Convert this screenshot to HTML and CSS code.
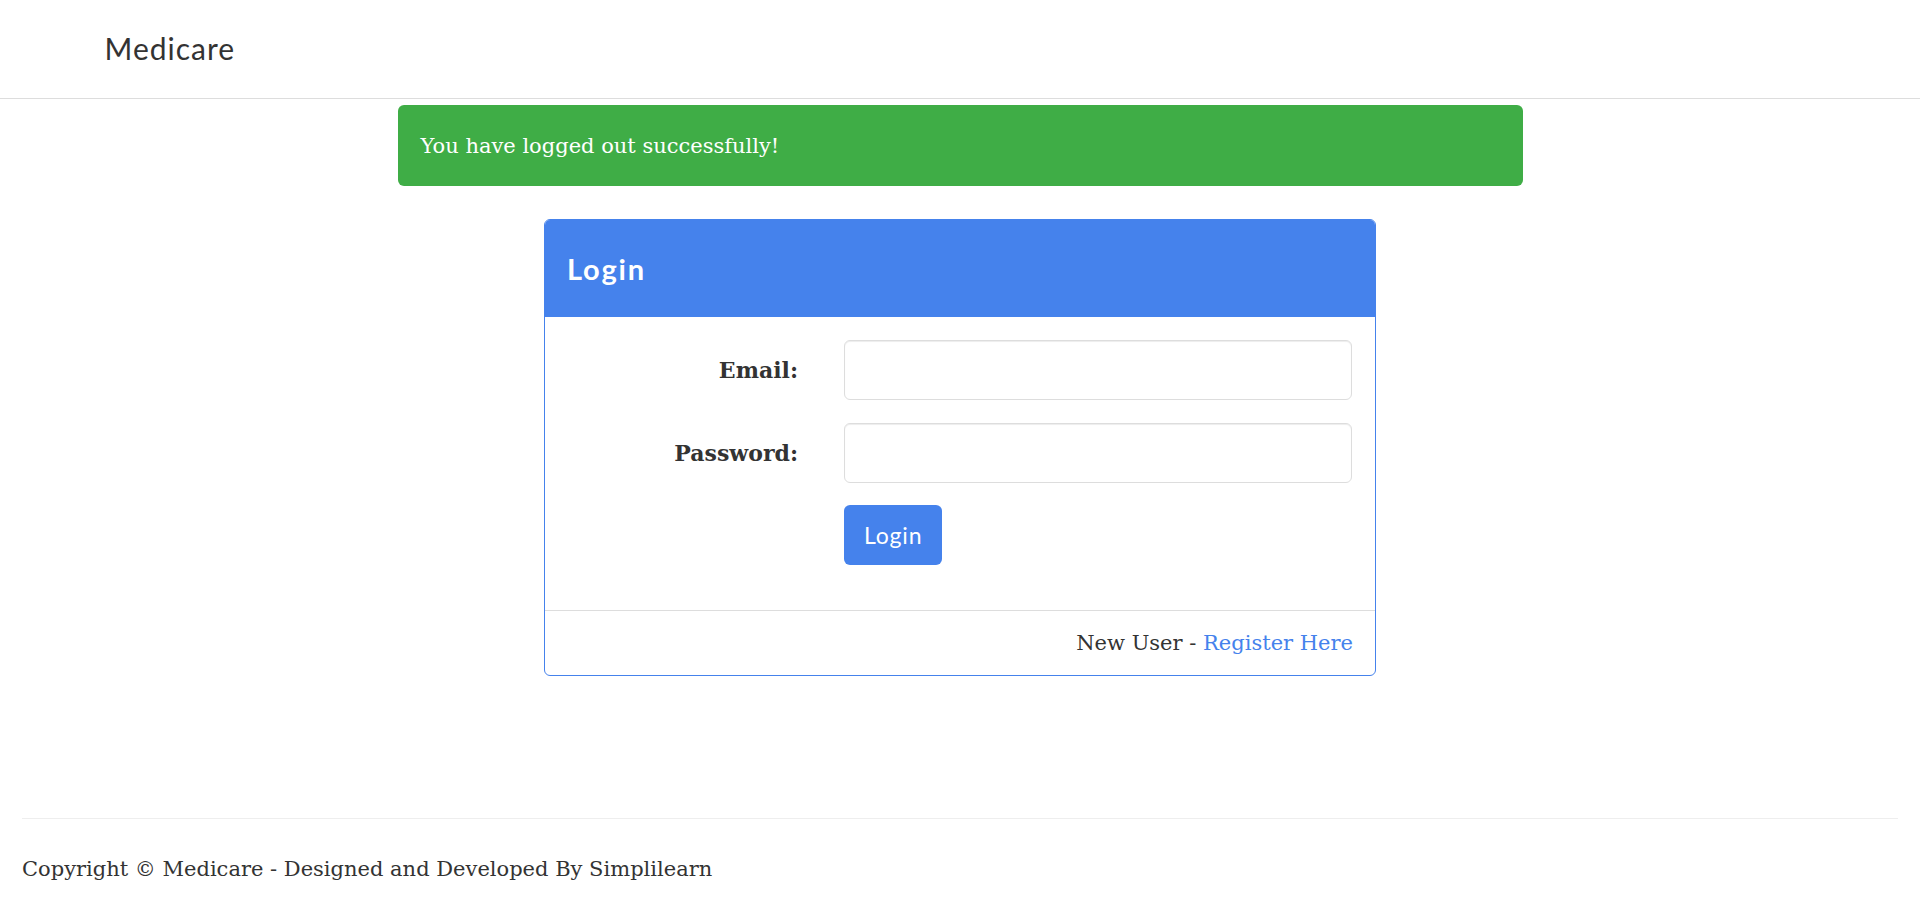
FILE: index.html
```html
<!DOCTYPE html>
<html lang="en">
<head>
<meta charset="utf-8">
<title>Medicare - Login</title>
<link rel="stylesheet" href="styles.css">
</head>
<body>
<nav class="navbar">
  <div class="container nav-inner">
    <a class="brand" href="#">Medicare</a>
  </div>
</nav>
<main class="main">
  <div class="alert">You have logged out successfully!</div>
  <div class="panel">
    <div class="panel-heading"><h3 class="panel-title">Login</h3></div>
    <div class="panel-body">
      <form class="login-form">
        <label class="form-label" for="email">Email:</label>
        <input class="form-input" id="email" type="email">
        <label class="form-label" for="password">Password:</label>
        <input class="form-input" id="password" type="password">
        <span></span>
        <div><button class="btn" type="button">Login</button></div>
      </form>
    </div>
    <div class="panel-footer">New User - <a class="link" href="#">Register Here</a></div>
  </div>
</main>
<footer class="site-footer">
  <hr class="footer-rule">
  <p class="copyright">Copyright © Medicare - Designed and Developed By Simplilearn</p>
</footer>
</body>
</html>
```
FILE: styles.css
```css
html, body {
  margin: 0;
  padding: 0;
}
body {
  font-family: "DejaVu Serif", Georgia, serif;
  font-size: 21px;
  line-height: 34px;
  color: #333;
  background: #fff;
}
.container {
  width: 1755px;
  margin: 0 auto;
  box-sizing: border-box;
}
.navbar {
  height: 98px;
  border-bottom: 1px solid #ddd;
}
.nav-inner {
  height: 98px;
  display: flex;
  align-items: center;
  padding-left: 22px;
}
.brand {
  font-family: Lato, "Open Sans", sans-serif;
  font-size: 30px;
  font-weight: 400;
  letter-spacing: 1px;
  color: #333;
  text-decoration: none;
  padding-bottom: 3px;
}
.main {
  display: flex;
  flex-direction: column;
  align-items: center;
}
.alert {
  margin-top: 6px;
  width: 1125px;
  height: 81px;
  box-sizing: border-box;
  padding: 0 23px;
  display: flex;
  align-items: center;
  background: #3fad46;
  color: #fff;
  border-radius: 6px;
}
.panel {
  margin-top: 33px;
  width: 832px;
  box-sizing: border-box;
  border: 1px solid #4582ec;
  border-radius: 6px;
  overflow: hidden;
}
.panel-heading {
  height: 97px;
  background: #4582ec;
  display: flex;
  align-items: center;
  padding: 0 22px;
}
.panel-title {
  margin: 0;
  font-family: Lato, "Open Sans", sans-serif;
  font-weight: 700;
  font-size: 29px;
  letter-spacing: 1.8px;
  color: #fff;
}
.panel-body {
  padding: 23px 22px 45px;
}
.login-form {
  display: grid;
  grid-template-columns: 231px 508px;
  column-gap: 46px;
  row-gap: 22.5px;
  grid-auto-rows: 60px;
  align-items: center;
}
.form-label {
  text-align: right;
  font-weight: 700;
  font-size: 22px;
}
.form-input {
  height: 60px;
  box-sizing: border-box;
  border: 1px solid #ddd;
  border-radius: 6px;
  box-shadow: inset 0 1px 1px rgba(0,0,0,0.075);
  padding: 0 18px;
  font: inherit;
}
.btn {
  height: 60px;
  padding: 0 20px;
  border: 0;
  border-radius: 6px;
  background: #4582ec;
  color: #fff;
  font-family: Lato, "Open Sans", sans-serif;
  font-size: 23px;
  letter-spacing: 0.8px;
}
.panel-footer {
  border-top: 1px solid #ddd;
  padding: 15px 22px;
  text-align: right;
}
.link {
  color: #4582ec;
  text-decoration: none;
}
.site-footer {
  margin-top: 142px;
  padding: 0 22px;
}
.footer-rule {
  margin: 0;
  border: 0;
  border-top: 1px solid #eee;
}
.copyright {
  margin: 33px 0 0;
}
```
